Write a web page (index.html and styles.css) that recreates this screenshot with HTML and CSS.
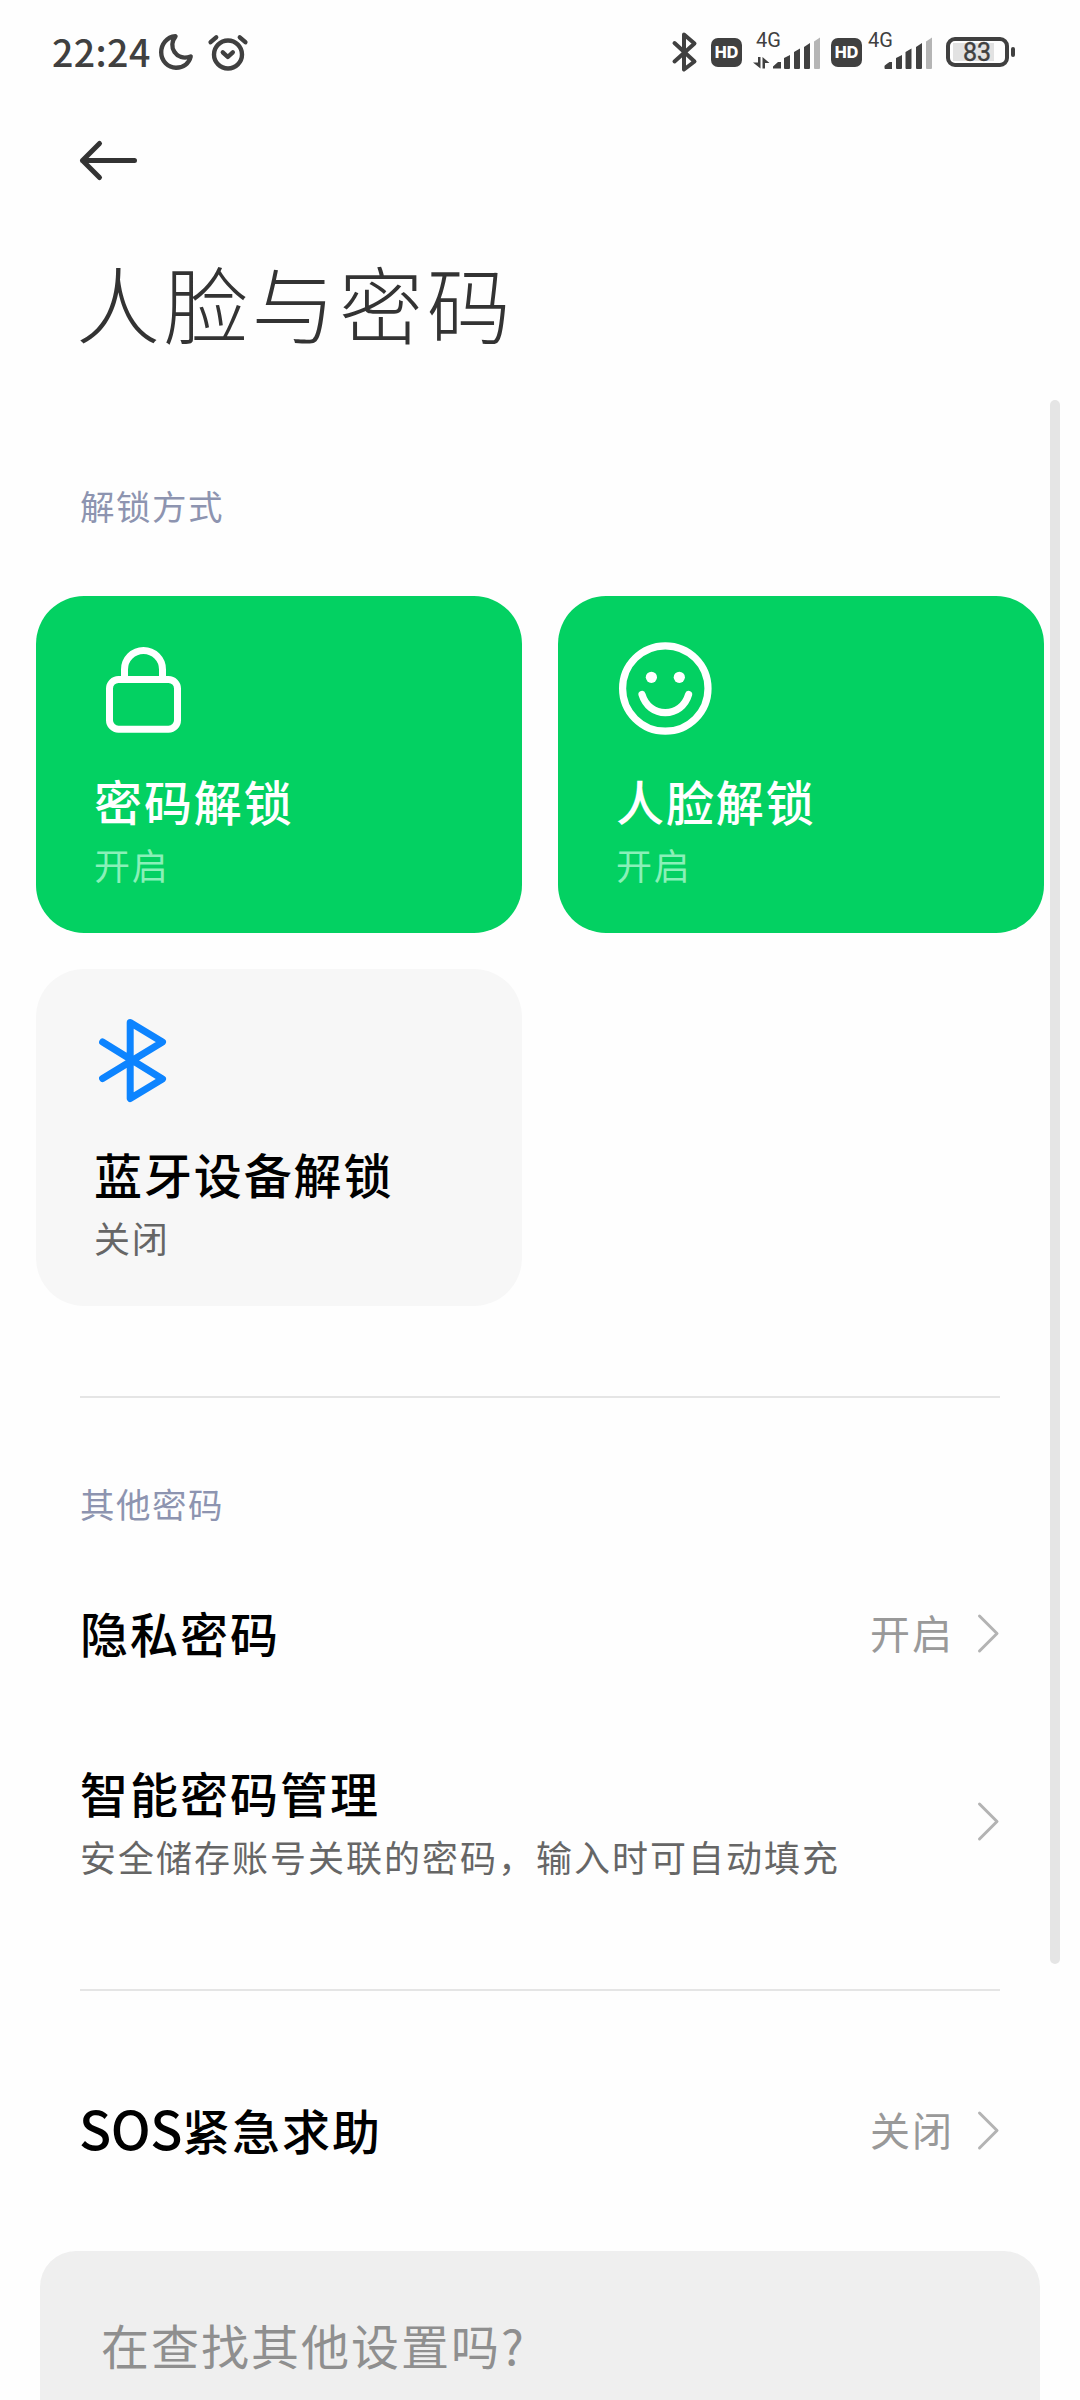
FILE: index.html
```html
<!DOCTYPE html>
<html lang="zh-CN">
<head>
<meta charset="utf-8">
<title>人脸与密码</title>
<link rel="stylesheet" href="styles.css">
</head>
<body>
<div class="screen">
  <header class="status">
    <span class="time">22:24</span>
    <svg class="moon" width="34" height="36" viewBox="0 0 34 36" fill="none" stroke="#404040" stroke-width="4.4" stroke-linejoin="round"><path d="M16.500 2.300C7.500 3 2.200 10.500 2.200 18.300C2.200 27 9 33.700 17 33.700C24.500 33.700 30 29.500 31.700 22.500C24.500 25 18.500 22.500 15.500 18C12.500 13.500 12.500 7.500 16.500 2.300Z"/></svg>
    <svg class="alarm" width="40" height="37" viewBox="0 0 40 37" fill="none" stroke="#404040" stroke-width="4.4" stroke-linecap="round" stroke-linejoin="round"><circle cx="20" cy="20.500" r="14"/><path d="M14.800 18.300l5 4.700 5-4.700M2.600 8.200l5.600-4.900M37.400 8.200l-5.600-4.900"/></svg>
    <div class="status-right">
      <svg class="bt" width="26" height="40" viewBox="0 0 26 40" fill="none" stroke="#404040" stroke-width="4" stroke-linecap="round" stroke-linejoin="round"><path d="M2.500 11L22.500 29.500L12 37.500V2.500L22.500 11.500L2.500 29.500"/></svg>
      <span class="hd">HD</span>
      <svg class="signal-a" width="68" height="46" viewBox="0 -8 68 46"><text x="3" y="15" class="net">4G</text><g fill="#404040"><path d="M5 25h2.500v11.500L0 30.500h5zM9.500 36.500V25l7 6h-4.500v5.500z"/><path d="M20 36.500v-2l5-4.500h3v6.500zM31 26l6-3v13q0 1-1 1h-4q-1 0-1-1zM41 20l6-3.500V36q0 1-1 1h-4q-1 0-1-1zM51 15l6-4V36q0 1-1 1h-4q-1 0-1-1z"/><path fill="#b5b5b5" d="M61 9.500L67 5.500V36q0 1-1 1h-4q-1 0-1-1z"/></g></svg>
      <span class="hd hd-second">HD</span>
      <svg class="signal-b" width="65" height="46" viewBox="0 -8 65 46"><text x="0" y="15" class="net">4G</text><g fill="#404040"><path d="M16.500 36v-2q0-.5 5-4h2.500v7h-6.500q-1 0-1-1zM28 26l6-3v13q0 1-1 1h-4q-1 0-1-1zM37.500 20l6-3.500V36q0 1-1 1h-4q-1 0-1-1zM48 15l6-4V36q0 1-1 1h-4q-1 0-1-1z"/><path fill="#b5b5b5" d="M58 9.500L64 5.500V36q0 1-1 1h-4q-1 0-1-1z"/></g></svg>
      <svg class="battery" width="70" height="30" viewBox="0 0 70 30"><rect x="7" y="6" width="41" height="18" fill="#e2e2e2"/><rect x="2" y="2" width="59" height="26" rx="7" fill="none" stroke="#404040" stroke-width="4"/><rect x="65" y="10" width="4" height="10" rx="2" fill="#404040"/><text x="17" y="24" class="level">83</text></svg>
    </div>
  </header>

  <div class="back">
    <svg width="60" height="40" viewBox="0 0 60 40" fill="none" stroke="#333" stroke-width="5" stroke-linecap="round" stroke-linejoin="round"><path d="M55.500 20.500H3.500M20.500 3.500L3.500 20.500L20.500 37.500"/></svg>
  </div>
  <h1 class="page-title">人脸与密码</h1>

  <main class="content">
    <h2 class="section-title">解锁方式</h2>
    <section class="cards">
      <article class="card on">
        <svg class="card-icon" width="100" height="94" viewBox="0 0 100 94" fill="none" stroke="#fff" stroke-width="7"><rect x="15.500" y="37.500" width="68" height="49.700" rx="9"/><path d="M30.500 37V27.500a19 19 0 0 1 38 0V37"/></svg>
        <h3 class="card-title">密码解锁</h3>
        <p class="card-state">开启</p>
      </article>
      <article class="card on">
        <svg class="card-icon" width="100" height="94" viewBox="0 0 100 94" fill="none" stroke="#fff" stroke-width="7.200" stroke-linecap="round"><circle cx="49.300" cy="46.500" r="42.700"/><path d="M26 52.500C29.500 64 38.500 70.600 49.300 70.600S69.200 64 72.600 52.500"/><g fill="#fff" stroke="none"><circle cx="35.400" cy="35.300" r="5.600"/><circle cx="63.300" cy="35.300" r="5.600"/></g></svg>
        <h3 class="card-title">人脸解锁</h3>
        <p class="card-state">开启</p>
      </article>
      <article class="card">
        <svg class="card-icon" width="100" height="94" viewBox="0 0 100 94" fill="none" stroke="#0d84ff" stroke-width="7" stroke-linecap="round" stroke-linejoin="round"><path d="M8.600 27L68.500 64L36.200 83.500V7.500L68.500 27L8.600 63.500"/></svg>
        <h3 class="card-title">蓝牙设备解锁</h3>
        <p class="card-state">关闭</p>
      </article>
    </section>

    <hr class="divider">
    <h2 class="section-title">其他密码</h2>
    <section class="row row-privacy">
      <h3 class="row-title">隐私密码</h3>
      <span class="value">开启</span>
      <svg class="chevron" width="22" height="40" viewBox="0 0 22 40"><path d="M1.500 4L19 21.500L1.500 39"/></svg>
    </section>
    <section class="row row-manager">
      <div class="row-text">
        <h3 class="row-title">智能密码管理</h3>
        <p class="row-note">安全储存账号关联的密码，输入时可自动填充</p>
      </div>
      <svg class="chevron" width="22" height="40" viewBox="0 0 22 40"><path d="M1.500 3L19 20.500L1.500 38"/></svg>
    </section>
    <hr class="divider">
    <section class="row row-sos">
      <h3 class="row-title"><span class="latin">SOS</span>紧急求助</h3>
      <span class="value">关闭</span>
      <svg class="chevron" width="22" height="40" viewBox="0 0 22 40"><path d="M1.500 4L19 21.500L1.500 39"/></svg>
    </section>
    <section class="suggest">在查找其他设置吗?</section>
  </main>
  <div class="scrollbar"></div>
</div>
</body>
</html>
```
FILE: styles.css
```css
* { box-sizing: border-box; margin: 0; padding: 0; }
body { background: #fefefe; font-family: "Noto Sans CJK SC", sans-serif; color: #000; }
svg { display: block; flex: none; overflow: visible; }
h1, h2, h3 { font-weight: 400; white-space: nowrap; }
.screen { position: relative; width: 1080px; height: 2400px; overflow: hidden; display: flex; flex-direction: column; }

.status { display: flex; align-items: center; height: 104px; padding: 0 64px 0 52px; color: #404040; flex: none; }
.time { width: 107px; margin-top: -3px; font-size: 37.5px; font-weight: 500; line-height: 48px; letter-spacing: .4px; }
.alarm { margin-left: 15px; }
.status-right { display: flex; align-items: center; margin-left: auto; }
.hd { width: 31px; height: 29px; margin-left: 13px; border-radius: 7px; background: #404040; color: #fff; font: 800 16px/29px Inter, sans-serif; text-align: center; }
.signal-a { margin-left: 11px; margin-top: -11px; }
.hd-second { margin-left: 10px; }
.signal-b { margin-left: 6px; margin-top: -11px; }
.battery { margin-left: 13px; }
.net { font: 400 20px Roboto, sans-serif; fill: #404040; }
.level { font: 400 25px Roboto, sans-serif; fill: #404040; stroke: #404040; stroke-width: .4px; }

.back { height: 112px; padding: 36px 0 0 79px; flex: none; }
.page-title { height: 184px; padding-left: 76px; font-size: 84px; font-weight: 300; line-height: 171px; letter-spacing: 3.7px; color: #333; flex: none; }

.content { display: flex; flex-direction: column; }
.section-title { height: 50px; padding-left: 80px; margin-top: 80px; font-size: 34.5px; line-height: 51px; letter-spacing: 1.5px; color: #8d94b0; }
.cards { display: grid; grid-template-columns: 486px 486px; gap: 36px; padding: 66px 36px 90px; }
.card { height: 337px; padding: 46px 58px 0; border-radius: 48px; background: #f7f7f7; }
.card.on { background: #03d162; color: #fff; }
.card-title { margin-top: 34px; font-size: 48px; font-weight: 500; line-height: 60px; letter-spacing: 1.9px; }
.card-state { margin-top: 10px; font-size: 36px; line-height: 49px; letter-spacing: 1.8px; color: #666; }
.on .card-state { color: #8af0b8; }

.divider { width: 920px; height: 2px; margin-left: 80px; border: 0; background: #e5e5e5; }
.row { display: flex; align-items: center; padding: 0 80px; }
.row-title { font-size: 48px; font-weight: 500; line-height: 60px; letter-spacing: 2px; }
.row-note { margin-top: 10px; font-size: 36px; line-height: 48px; letter-spacing: 2px; color: #666; white-space: nowrap; }
.value { margin-left: auto; font-size: 40px; line-height: 60px; letter-spacing: 2px; color: #999; }
.chevron { margin-left: auto; fill: none; stroke: #b3b3b3; stroke-width: 3; stroke-linecap: round; stroke-linejoin: round; }
.value + .chevron { margin-left: 24px; }
.row-privacy { margin-top: 74px; height: 60px; }
.row-manager { margin-top: 100px; height: 118px; }
.row-manager + .divider { margin-top: 109px; }
.row-sos { margin-top: 108px; height: 60px; }
.latin { margin-left: -1px; font-size: 53px; line-height: 1; letter-spacing: -.5px; }
.suggest { width: 1000px; height: 200px; margin: 92px 0 0 40px; padding-left: 61px; border-radius: 36px; background: #efefef; color: #8f8f8f; font-size: 48px; line-height: 186px; letter-spacing: 2px; }

.scrollbar { position: absolute; left: 1050px; top: 400px; width: 10px; height: 1564px; border-radius: 5px; background: #e5e5e5; }
```
